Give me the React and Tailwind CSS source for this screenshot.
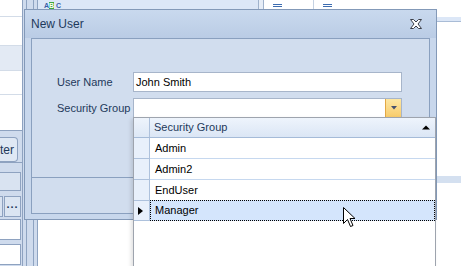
import React from "react";

function Row({ label, selected }) {
  return (
    <div className={selected ? "flex h-[21px] -mt-px relative" : "flex h-[21px]"}>
      <div
        className={
          selected
            ? "w-[16px] shrink-0 border-r border-t border-b border-[#adc1dc] bg-[#e8f0fb] flex items-center justify-center"
            : "w-[16px] shrink-0 border-r border-b border-[#adc1dc] bg-[#e8f0fb] flex items-center justify-center"
        }
      >
        {selected && (
          <svg width="5" height="8" viewBox="0 0 5 8" className="ml-[-2px]">
            <polygon points="0,0 5,4 0,8" fill="#000" />
          </svg>
        )}
      </div>
      {selected ? (
        <div className="flex-1 flex items-center pl-[4px] bg-[#d4e5fc] border border-dotted border-black text-black">
          {label}
        </div>
      ) : (
        <div className="flex-1 flex items-center pl-[5px] border-b border-[#c6d8ef] text-black">{label}</div>
      )}
    </div>
  );
}

export default function App() {
  return (
    <div className="relative w-[461px] h-[266px] overflow-hidden bg-white font-['Liberation_Sans',Arial,sans-serif] text-[11px] leading-none">
      {/* background */}
      <div className="flex h-full">
        {/* left column */}
        <div className="w-[23px] flex flex-col bg-[#cfdbed] border-r border-[#8ea2c0]">
          <div className="h-[131px] bg-white border-b border-[#8ea2c0] flex flex-col">
            <div className="h-[17px] border-b border-[#d3dce8]" />
            <div className="h-[29px] border-b border-[#d3dce8]" />
            <div className="h-[25px] bg-[#e3eaf4] border-b border-[#d3dce8]" />
            <div className="h-[24px] border-b border-[#d3dce8]" />
          </div>
          <div className="h-[32px] pt-[6px] border-b border-[#8ea2c0]">
            <div className="w-[18px] h-[25px] border border-l-0 border-[#8ea2c0] bg-[#dfe8f4] rounded-r-sm flex items-center justify-end pr-[3px] overflow-hidden text-[#1e395b] text-[12px] whitespace-nowrap">
              lter
            </div>
          </div>
          <div className="mt-[9px] w-[21px] h-[19px] border border-l-0 border-[#8ea2c0] bg-[#d9e3f1]" />
          <div className="mt-[5px] flex h-[21px] w-[21px]">
            <div className="w-[3px] border border-l-0 border-[#8ea2c0] bg-[#d9e3f1]" />
            <div className="ml-[1px] flex-1 border border-[#8ea2c0] bg-[#dbe5f2] flex items-center justify-center text-[#1e395b] font-bold tracking-[1px] pb-[4px]">
              ...
            </div>
          </div>
          <div className="mt-[2px] w-[21px] h-[21px] border border-l-0 border-[#8ea2c0] bg-white" />
          <div className="mt-[4px] w-[21px] h-[21px] border border-l-0 border-[#8ea2c0] bg-white" />
        </div>
        {/* frame strips */}
        <div className="w-[3px] bg-[#cfdbed]" />
        <div className="w-px bg-[#8ea3c1]" />
        <div className="w-[6px] bg-[#cfdbed]" />
        <div className="w-px bg-[#8ea3c1]" />
        <div className="w-[3px] bg-[#cfdbed]" />
        <div className="w-px bg-[#8ea3c1]" />
        {/* grid area */}
        <div className="flex-1 flex flex-col bg-white">
          <div className="h-[9px] flex">
            <div className="w-[220px] bg-[#dce7f7] pl-[6px] pt-[2px] flex items-start">
              <div className="flex items-center h-[7px] text-[7px] font-bold leading-none">
                <span className="text-[#3a5fa8] w-[4px]">A</span>
                <span className="ml-[1px] bg-[#3ea83e] text-white w-[5px] h-[7px] flex items-center justify-center">B</span>
                <span className="ml-[2px] text-[#3a5fa8]">C</span>
              </div>
            </div>
            <div className="w-px bg-[#9fb2cc]" />
            <div className="w-[4px] bg-[#e6edf7]" />
            <div className="w-px bg-[#9fb2cc]" />
            <div className="w-[49px] pl-[9px] pt-[4px] flex flex-col gap-[1px]">
              <div className="w-[9px] h-px bg-[#3d6cb0]" />
              <div className="w-[9px] h-px bg-[#3d6cb0]" />
            </div>
            <div className="w-px bg-[#c5d2e3]" />
            <div className="flex-1 pl-[9px] pt-[4px] flex flex-col gap-[1px]">
              <div className="w-[9px] h-px bg-[#3d6cb0]" />
              <div className="w-[9px] h-px bg-[#3d6cb0]" />
            </div>
          </div>
          <div className="h-[8px]" />
          <div className="h-[5px] bg-[#dce7f7] border-b border-[#a9bcd6]" />
          <div className="h-[154px]" />
          <div className="h-[7px] bg-[#d4e0f0]" />
          <div className="flex-1" />
        </div>
      </div>

      {/* dialog */}
      <div className="absolute left-[24px] top-[9px] w-[413px] h-[211px] border border-[#8399b8] bg-[#c8d7ec] flex flex-col">
        <div className="h-[28px] flex items-center justify-between pl-[6px] pr-[14px] bg-gradient-to-b from-[#c9d9ee] to-[#bacce5] text-[#1e395b] text-[12px]">
          <span className="mt-[-1px]">New User</span>
          <svg width="12" height="10" viewBox="0 0 12 10">
            <path
              d="M0.5,0.5 H3.5 L6,3 L8.5,0.5 H11.5 L8,5 L11.5,9.5 H8.5 L6,7 L3.5,9.5 H0.5 L4,5 Z"
              fill="#ffffff"
              stroke="#3b3f48"
              strokeWidth="1"
              strokeLinejoin="round"
            />
          </svg>
        </div>
        <div className="mx-[6px] h-[176px] border border-[#8aa0bf] bg-[#d1ddee] flex flex-col">
          <div className="h-[139px] border-b border-[#8aa0bf] pt-[33px] pl-[25px] flex flex-col gap-[6px]">
            <div className="flex items-center h-[20px]">
              <div className="w-[76px] text-[#1e395b]">User Name</div>
              <div className="w-[269px] h-[20px] border border-[#a7b5ca] bg-white flex items-center pl-[2px] text-black">
                John Smith
              </div>
            </div>
            <div className="flex items-center h-[20px]">
              <div className="w-[76px] text-[#1e395b]">Security Group</div>
              <div className="w-[269px] h-[20px] border border-[#a7b5ca] bg-white flex justify-end">
                <div className="w-[16px] h-full border-l border-[#e3a845] bg-gradient-to-b from-[#fde7a3] to-[#f8cc6b] flex items-center justify-center">
                  <svg width="6" height="4" viewBox="0 0 6 4">
                    <polygon points="0,0 6,0 3,3.5" fill="#45506e" />
                  </svg>
                </div>
              </div>
            </div>
          </div>
          <div className="h-[35px]" />
        </div>
      </div>

      {/* dropdown popup */}
      <div className="absolute left-[133px] top-[117px] w-[303px] h-[160px] border border-[#9ea4ae] bg-white shadow-[-2px_2px_4px_rgba(0,0,0,0.12)] flex flex-col">
        <div className="flex h-[20px] border-b border-[#a5bbd8]">
          <div className="w-[16px] border-r border-[#adc1dc] bg-gradient-to-b from-[#eef4fc] to-[#dde8f6]" />
          <div className="flex-1 flex items-center justify-between pl-[4px] pr-[5px] bg-gradient-to-b from-[#eef4fc] to-[#dbe6f5] text-[#1e395b]">
            <span>Security Group</span>
            <svg width="8" height="5" viewBox="0 0 8 5">
              <polygon points="0,4.5 8,4.5 4,0.5" fill="#000" />
            </svg>
          </div>
        </div>
        <Row label="Admin" />
        <Row label="Admin2" />
        <Row label="EndUser" />
        <Row label="Manager" selected />
        <div className="flex-1 flex">
          <div className="w-[16px]" />
        </div>
      </div>

      {/* mouse cursor */}
      <svg className="absolute left-[343px] top-[207px]" width="13" height="21" viewBox="0 0 13 21">
        <path
          d="M0.5,0.5 L0.5,16.5 L4.5,12.5 L7.5,19.5 L10,18.5 L7,11.5 L12,11.5 Z"
          fill="#ffffff"
          stroke="#000000"
          strokeWidth="1"
          strokeLinejoin="miter"
        />
      </svg>
    </div>
  );
}
